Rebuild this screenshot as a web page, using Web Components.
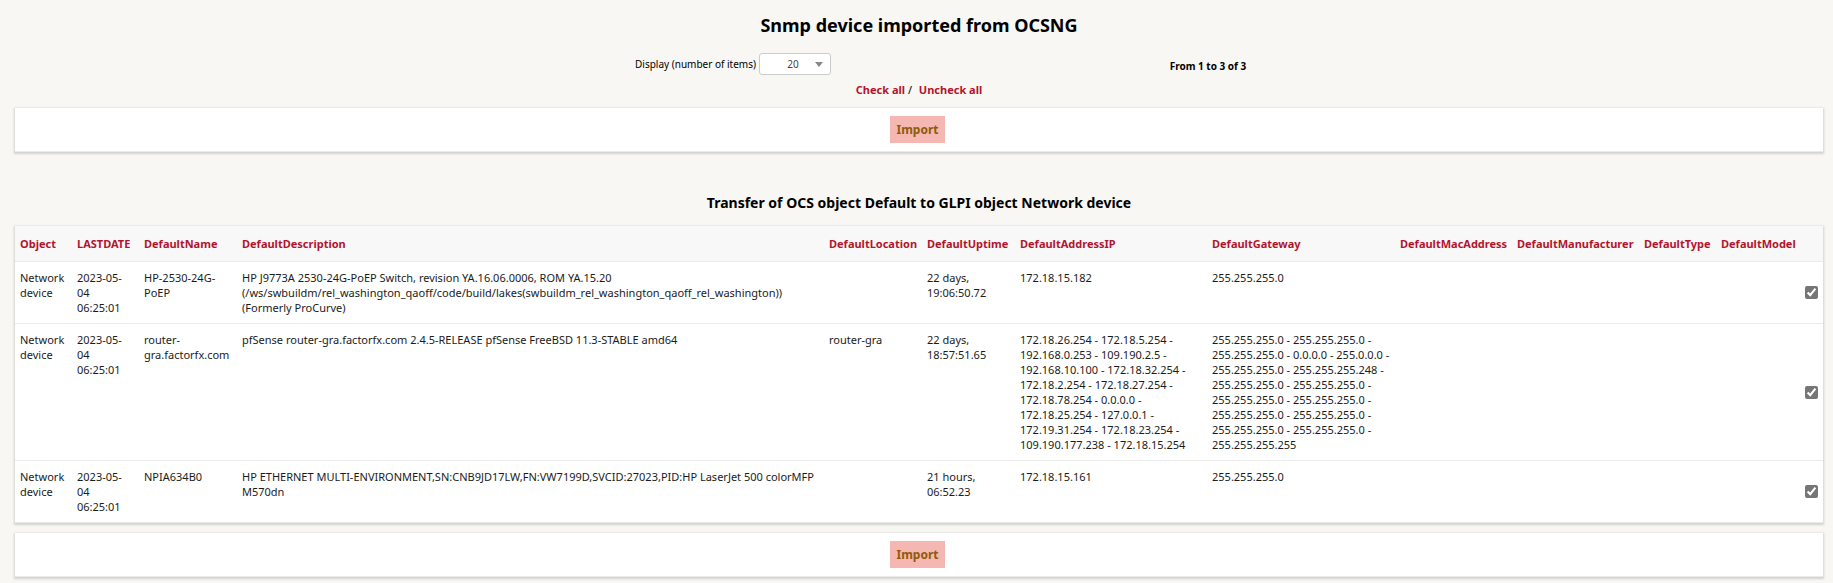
<!DOCTYPE html>
<html lang="en">
<head>
<meta charset="utf-8">
<title>Snmp device imported from OCSNG</title>
<style>
  body {
    margin: 0;
    background: #f8f7f3;
    color: #000;
    font: 11px/15px "Noto Sans", sans-serif;
  }
</style>
</head>
<body>
<ocs-import-page></ocs-import-page>

<script>
const define = (name, html, setup) => {
  const template = document.createElement('template');
  template.innerHTML = html;
  customElements.define(name, class extends HTMLElement {
    constructor() {
      super();
      this.attachShadow({ mode: 'open' }).append(template.content.cloneNode(true));
    }
    connectedCallback() {
      if (setup) setup(this, this.shadowRoot);
    }
  });
};

const devices = [
  ['Network device', '2023-05-04 06:25:01', 'HP-2530-24G-PoEP',
   'HP J9773A 2530-24G-PoEP Switch, revision YA.16.06.0006, ROM YA.15.20 (/ws/swbuildm/rel_washington_qaoff/code/build/lakes(swbuildm_rel_washington_qaoff_rel_washington)) (Formerly ProCurve)',
   '', '22 days, 19:06:50.72', '172.18.15.182', '255.255.255.0', '', '', '', ''],
  ['Network device', '2023-05-04 06:25:01', 'router-gra.factorfx.com',
   'pfSense router-gra.factorfx.com 2.4.5-RELEASE pfSense FreeBSD 11.3-STABLE amd64',
   'router-gra', '22 days, 18:57:51.65',
   '172.18.26.254 - 172.18.5.254 - 192.168.0.253 - 109.190.2.5 - 192.168.10.100 - 172.18.32.254 - 172.18.2.254 - 172.18.27.254 - 172.18.78.254 - 0.0.0.0 - 172.18.25.254 - 127.0.0.1 - 172.19.31.254 - 172.18.23.254 - 109.190.177.238 - 172.18.15.254',
   '255.255.255.0 - 255.255.255.0 - 255.255.255.0 - 0.0.0.0 - 255.0.0.0 - 255.255.255.0 - 255.255.255.248 - 255.255.255.0 - 255.255.255.0 - 255.255.255.0 - 255.255.255.0 - 255.255.255.0 - 255.255.255.0 - 255.255.255.0 - 255.255.255.0 - 255.255.255.255',
   '', '', '', ''],
  ['Network device', '2023-05-04 06:25:01', 'NPIA634B0',
   'HP ETHERNET MULTI-ENVIRONMENT,SN:CNB9JD17LW,FN:VW7199D,SVCID:27023,PID:HP LaserJet 500 colorMFP M570dn',
   '', '21 hours, 06:52.23', '172.18.15.161', '255.255.255.0', '', '', '', '']
];

const columns = [
  ['Object', 57], ['LASTDATE', 67], ['DefaultName', 98], ['DefaultDescription', 0],
  ['DefaultLocation', 98], ['DefaultUptime', 93], ['DefaultAddressIP', 192],
  ['DefaultGateway', 188], ['DefaultMacAddress', 117], ['DefaultManufacturer', 127],
  ['DefaultType', 77], ['DefaultModel', 84]
];

define('ocs-pager', `
  <style>
    :host {
      display: grid;
      grid-template-columns: 578fr 372fr;
      align-items: center;
      justify-items: center;
      width: 100%;
      max-width: 950px;
      margin: 0 auto;
    }
    .count { display: flex; align-items: center; gap: 3px; font-size: 10px; }
    .picker { display: grid; align-items: center; }
    select, svg { grid-area: 1 / 1; }
    select {
      appearance: none;
      box-sizing: border-box;
      width: 72px;
      height: 22px;
      margin: 0;
      padding: 0 12px 0 8px;
      border: 1px solid #ccc;
      border-radius: 3px;
      background: #fff;
      color: #444;
      font: inherit;
      text-align-last: center;
    }
    svg { justify-self: end; margin-right: 8px; pointer-events: none; }
    .range { padding-top: 4px; font-size: 10px; font-weight: 700; }
  </style>
  <div class="count">
    <label for="limit">Display (number of items)</label>
    <div class="picker">
      <select id="limit"><option>20</option><option>50</option><option>100</option></select>
      <svg width="8" height="5" viewBox="0 0 8 5" aria-hidden="true"><path d="M0 0h8L4 5z" fill="#888"/></svg>
    </div>
  </div>
  <div class="range"><slot></slot></div>
`);

define('ocs-check-links', `
  <style>
    :host { display: block; text-align: center; }
    a { color: #b3142d; font-weight: 700; text-decoration: none; }
    a + a { margin-left: 4px; }
  </style>
  <a href="#all">Check all</a> /
  <a href="#none">Uncheck all</a>
`, (host, root) => {
  root.addEventListener('click', event => {
    const link = event.target.closest('a');
    if (!link) return;
    event.preventDefault();
    host.dispatchEvent(new CustomEvent('check-all', { bubbles: true, detail: link.hash === '#all' }));
  });
});

define('ocs-action-bar', `
  <style>
    :host {
      display: flex;
      justify-content: center;
      padding: 8px 11px 8px 8px;
      border-bottom: 1px solid #ebebeb;
      background: #fff;
      box-shadow: 0 1px 2px 1px #d2d2d2;
    }
    button {
      padding: 5px 6px;
      border: 0;
      background: #f5b7b1;
      color: #8f5a0a;
      font: 700 12px/17px "Noto Sans", sans-serif;
    }
  </style>
  <button type="button"><slot></slot></button>
`);

define('ocs-device-table', `
  <style>
    :host { display: block; box-shadow: 0 1px 2px 1px #d2d2d2; }
    table {
      width: 100%;
      border-collapse: separate;
      border-spacing: 0;
      table-layout: fixed;
      background: #fff;
    }
    th, td { padding: 8px 5px; border-bottom: 1px solid #ebebeb; text-align: left; vertical-align: top; }
    th { padding: 10px 5px; background: #f8f8f8; color: #b3142d; white-space: nowrap; }
    td { color: #1b1b1b; }
    .pick { vertical-align: middle; }
    input { display: block; width: 13px; height: 13px; margin: 0; accent-color: #767676; }
  </style>
  <table>
    <colgroup></colgroup>
    <thead><tr></tr></thead>
    <tbody></tbody>
  </table>
`, (host, root) => {
  const group = root.querySelector('colgroup');
  const head = root.querySelector('thead tr');
  for (const [name, width] of columns) {
    const col = document.createElement('col');
    if (width) col.style.width = width + 'px';
    group.append(col);
    const th = document.createElement('th');
    th.scope = 'col';
    th.textContent = name;
    head.append(th);
  }
  const last = document.createElement('col');
  last.style.width = '23px';
  group.append(last);
  head.append(document.createElement('th'));

  for (const device of devices) {
    const row = root.querySelector('tbody').insertRow();
    for (const value of device) row.insertCell().textContent = value;
    const cell = row.insertCell();
    cell.className = 'pick';
    const box = document.createElement('input');
    box.type = 'checkbox';
    box.checked = true;
    box.setAttribute('aria-label', 'Select ' + device[2]);
    cell.append(box);
  }
});

define('ocs-import-page', `
  <style>
    :host { display: block; padding: 12px 10px 6px 15px; }
    h1, h2 { margin: 0; text-align: center; font-weight: 700; }
    h1 { font-size: 18px; line-height: 26px; margin-bottom: 15px; }
    h2 { font-size: 14px; line-height: 20px; margin: 41px 0 13px; }
    ocs-check-links { margin: 7px 0 11px; }
    ocs-device-table { margin-bottom: 10px; }
  </style>
  <h1>Snmp device imported from OCSNG</h1>
  <ocs-pager>From 1 to 3 of 3</ocs-pager>
  <ocs-check-links></ocs-check-links>
  <ocs-action-bar>Import</ocs-action-bar>
  <h2>Transfer of OCS object Default to GLPI object Network device</h2>
  <ocs-device-table></ocs-device-table>
  <ocs-action-bar>Import</ocs-action-bar>
`, (host, root) => {
  root.addEventListener('check-all', event => {
    const table = root.querySelector('ocs-device-table').shadowRoot;
    for (const box of table.querySelectorAll('input')) box.checked = event.detail;
  });
});
</script>
</body>
</html>
